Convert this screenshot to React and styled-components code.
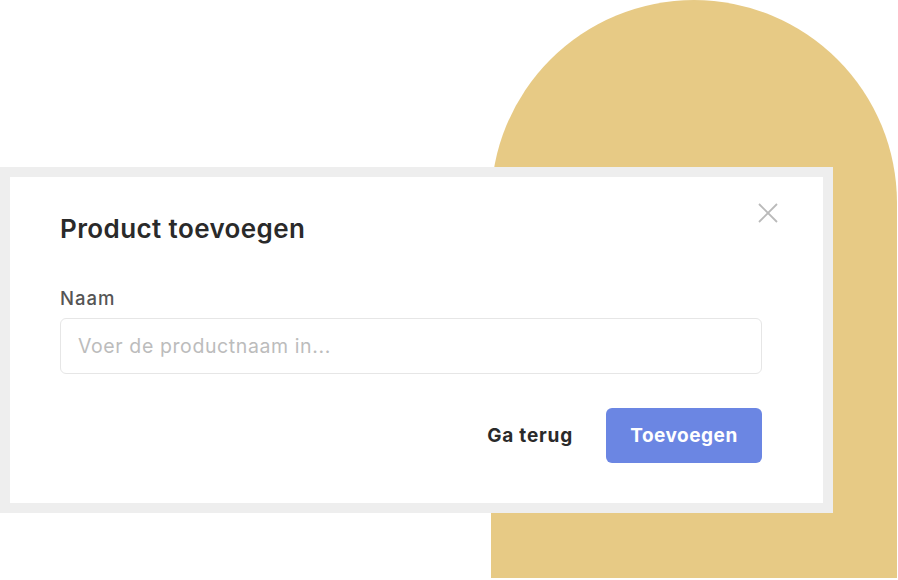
import React, { useState } from "react";
import styled, { createGlobalStyle } from "styled-components";

const GlobalStyle = createGlobalStyle`
  html, body {
    margin: 0;
    padding: 0;
    background: #ffffff;
  }
  body {
    font-family: Inter, "Noto Sans", "Liberation Sans", sans-serif;
    -webkit-font-smoothing: antialiased;
  }
`;

const Page = styled.div`
  position: relative;
  width: 898px;
  height: 580px;
  overflow: hidden;
  padding-top: 167px;
  box-sizing: border-box;
`;

const Arch = styled.div`
  position: absolute;
  left: 491px;
  top: 0;
  width: 406px;
  height: 578px;
  background: #e7ca85;
  border-radius: 203px 203px 0 0;
`;

const Frame = styled.div`
  position: relative;
  width: 833px;
  box-sizing: border-box;
  border: 10px solid #eeeeee;
  background: #ffffff;
`;

const Card = styled.form`
  position: relative;
  display: flex;
  flex-direction: column;
  padding: 36px 61px 40px 50px;
  height: 326px;
  box-sizing: border-box;
`;

const Title = styled.h2`
  margin: 0;
  font-size: 26px;
  line-height: 32px;
  font-weight: 600;
  color: #2a2a2a;
  letter-spacing: 0.4px;
`;

const CloseButton = styled.button`
  position: absolute;
  top: 25px;
  right: 44px;
  width: 22px;
  height: 22px;
  padding: 0;
  border: none;
  background: transparent;
  cursor: pointer;
  display: flex;
  align-items: center;
  justify-content: center;
`;

const Field = styled.div`
  display: flex;
  flex-direction: column;
  gap: 9px;
  margin-top: 42px;
`;

const Label = styled.label`
  font-size: 18.5px;
  line-height: 22px;
  font-weight: 500;
  color: #555555;
  letter-spacing: 1px;
`;

const Input = styled.input`
  height: 56px;
  box-sizing: border-box;
  border: 1px solid #e6e6e6;
  border-radius: 6px;
  padding: 0 17px;
  font-family: inherit;
  font-size: 19.5px;
  letter-spacing: 0.6px;
  color: #333;
  outline: none;
  &::placeholder {
    color: #bcbcbc;
  }
  &:focus {
    border-color: #6b86e3;
  }
`;

const Actions = styled.div`
  display: flex;
  justify-content: flex-end;
  align-items: center;
  gap: 33px;
  margin-top: 34px;
`;

const Button = styled.button`
  font-family: inherit;
  font-size: 19px;
  font-weight: 700;
  letter-spacing: ${(p) => (p.$primary ? "0.5px" : "0.8px")};
  border: none;
  border-radius: 6px;
  cursor: pointer;
  height: 55px;
  padding: ${(p) => (p.$primary ? "0 20px" : "0")};
  min-width: ${(p) => (p.$primary ? "156px" : "0")};
  background: ${(p) => (p.$primary ? "#6b86e3" : "transparent")};
  color: ${(p) => (p.$primary ? "#ffffff" : "#2a2a2a")};
`;

const App = () => {
  const [name, setName] = useState("");

  return (
    <>
      <GlobalStyle />
      <Page>
        <Arch />
        <Frame>
          <Card onSubmit={(e) => e.preventDefault()}>
            <Title>Product toevoegen</Title>
            <CloseButton type="button" aria-label="Sluiten">
              <svg width="20" height="20" viewBox="0 0 20 20">
                <path
                  d="M1 1 L19 19 M19 1 L1 19"
                  stroke="#bababa"
                  strokeWidth="1.8"
                  fill="none"
                />
              </svg>
            </CloseButton>
            <Field>
              <Label htmlFor="naam">Naam</Label>
              <Input
                id="naam"
                placeholder="Voer de productnaam in..."
                value={name}
                onChange={(e) => setName(e.target.value)}
              />
            </Field>
            <Actions>
              <Button type="button">Ga terug</Button>
              <Button type="submit" $primary>
                Toevoegen
              </Button>
            </Actions>
          </Card>
        </Frame>
      </Page>
    </>
  );
};

export default App;
